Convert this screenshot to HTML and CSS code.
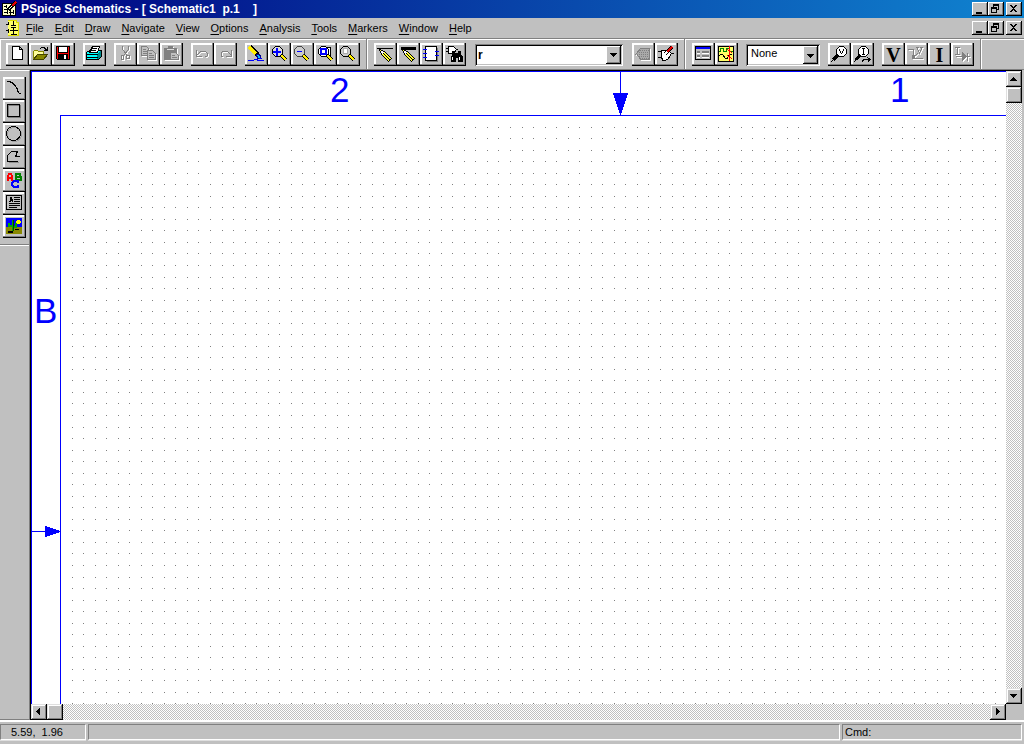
FILE: index.html
```html
<!DOCTYPE html>
<html lang="en">
<head>
<meta charset="utf-8">
<title>PSpice Schematics</title>
<link rel="stylesheet" href="styles.css">
</head>
<body>
<div class="app">
  <header class="titlebar">
    <svg class="app-icon" width="16" height="16" viewBox="0 0 16 16"><path fill="#ffc" stroke="#000" d="M.5 2.500h13v12H.5z"/><path fill="none" stroke="#000" d="M2 5.500h3M2 8.500h4M2 11.500h3M4.500 4v3M5.500 8v5M8.500 9v5M11.500 9v4M7 11.500h4"/><path stroke="#000" stroke-width="3" d="M6 9l8-8"/><path stroke="#e00000" stroke-width="2" d="M10 5l4-4"/><path stroke="#fff" d="M6.500 8.500l3-3"/></svg>
    <h1 class="title">PSpice Schematics - [ Schematic1&nbsp; p.1&nbsp;&nbsp;&nbsp; ]</h1>
    <div class="winbtns">
      <button class="wbtn" aria-label="Minimize"><svg width="16" height="14"><path d="M4 10h6v2H4z"/></svg></button>
      <button class="wbtn" aria-label="Restore"><svg width="16" height="14"><path fill="none" stroke="#000" d="M5.500 5V2.500h5v5H9M5 3.500h6M3.500 6.500h5v4h-5zM3 5.500h6"/></svg></button>
      <button class="wbtn close" aria-label="Close"><svg width="16" height="14"><path d="M4 3h2v1h1v1h1V4h1V3h2v1h-1v1H9v1H8v1h1v1h1v1h1v1H9V9H8V8H7v1H6v1H4V9h1V8h1V7h1V6H6V5H5V4H4z"/></svg></button>
    </div>
  </header>

  <nav class="menubar">
    <svg class="doc-icon" width="13" height="16" viewBox="0 0 13 16"><path fill="#ff6" d="M2 0h9v2h2v13H2z"/><path fill="none" stroke="#dd0" d="M2 .5h8.500v2h2v12.500H2"/><path fill="none" stroke="#000" d="M0 4.500h3M0 10.500h3M7.500 1v4M5 5.500h5M5 7.500h5M7.500 8v6M4 10.500h8M2.500 2v3M2.500 9v4M5 14.500h6"/></svg>
    <button class="menu"><u>F</u>ile</button>
    <button class="menu"><u>E</u>dit</button>
    <button class="menu"><u>D</u>raw</button>
    <button class="menu"><u>N</u>avigate</button>
    <button class="menu"><u>V</u>iew</button>
    <button class="menu"><u>O</u>ptions</button>
    <button class="menu"><u>A</u>nalysis</button>
    <button class="menu"><u>T</u>ools</button>
    <button class="menu"><u>M</u>arkers</button>
    <button class="menu"><u>W</u>indow</button>
    <button class="menu"><u>H</u>elp</button>
    <div class="winbtns">
      <button class="wbtn" aria-label="Minimize document"><svg width="16" height="14"><path d="M4 10h6v2H4z"/></svg></button>
      <button class="wbtn" aria-label="Restore document"><svg width="16" height="14"><path fill="none" stroke="#000" d="M5.500 5V2.500h5v5H9M5 3.500h6M3.500 6.500h5v4h-5zM3 5.500h6"/></svg></button>
      <button class="wbtn close" aria-label="Close document"><svg width="16" height="14"><path d="M4 3h2v1h1v1h1V4h1V3h2v1h-1v1H9v1H8v1h1v1h1v1h1v1H9V9H8V8H7v1H6v1H4V9h1V8h1V7h1V6H6V5H5V4H4z"/></svg></button>
    </div>
  </nav>

  <div class="toolbar">
    <div class="band">
      <div class="group">
        <button class="tool" aria-label="New"><svg viewBox="0 0 23 23"><path fill="#fff" stroke="#000" d="M6.500 3.500h7l3 3v10h-10zM13.500 3.500v3h3"/></svg></button>
        <button class="tool" aria-label="Open"><svg viewBox="0 0 23 23"><path fill="#ff9" stroke="#880" d="M4.500 16.500v-8l1-1h3l1 1h5v3"/><path fill="#880" stroke="#440" d="M4.500 16.500l4-5h10l-4 5z"/><path fill="none" stroke="#000" d="M11 5.500l2-1h2l3 3M18.500 4v3.500H15"/></svg></button>
        <button class="tool" aria-label="Save"><svg viewBox="0 0 23 23"><path fill="red" stroke="#000" d="M4.500 3.500h13v13h-12l-1-1z"/><path d="M6 3h10v7H6zM6 11h10v6H6z"/><path fill="#fff" d="M7 4h8v5H7zM12 12h2v4h-2z"/></svg></button>
      </div>
      <div class="group">
        <button class="tool" aria-label="Print"><svg viewBox="0 0 23 23"><path fill="#0ff" stroke="#000" d="M3.500 9.500l3-2h12v6l-3 3h-12z"/><path fill="#088" d="M14 11l4-3v6l-3 2h-1z"/><path fill="#fff" stroke="#000" d="M6.500 9.500l3-6h7l-2 6z"/><path stroke="#000" d="M9 5.500h5M8 7.500h5M4 11.500h11M4 14.500h11"/></svg></button>
      </div>
      <div class="group">
        <button class="tool" disabled aria-label="Cut"><svg viewBox="0 0 23 23"><path fill="none" stroke="#808080" d="M8.500 3v3l2 3 3 4M14.500 3v3l-2 3-3 4M7.500 12.500h2v4h-2zM12.500 12.500h3v3h-3z"/></svg></button>
        <button class="tool" disabled aria-label="Copy"><svg viewBox="0 0 23 23"><path fill="#c0c0c0" stroke="#808080" d="M4.500 3.500h5l2 2v7h-7zM6 6.500h3M6 8.500h4M6 10.500h4"/><path fill="#c0c0c0" stroke="#808080" d="M10.500 7.500h5l3 3v6h-8zM12 10.500h3M12 12.500h5M12 14.500h5"/></svg></button>
        <button class="tool" disabled aria-label="Paste"><svg viewBox="0 0 23 23"><path fill="#808080" d="M4 5h4V3h5v2h4v12H4z"/><path stroke="#ddd" d="M7 6.500h7"/><path fill="#c0c0c0" stroke="#808080" d="M10.500 9.500h5l3 3v4h-8zM12 12.500h3M12 14.500h5"/></svg></button>
      </div>
      <div class="group">
        <button class="tool" disabled aria-label="Undo"><svg viewBox="0 0 23 23"><path fill="none" stroke="#808080" d="M5.500 7v6H11M6 12l4-4h4l2 2v3l-2 1"/></svg></button>
        <button class="tool" disabled aria-label="Redo"><svg viewBox="0 0 23 23"><path fill="none" stroke="#808080" d="M17.500 7v6H12M17 12l-4-4H9l-2 2v3l2 1"/></svg></button>
      </div>
      <div class="group">
        <button class="tool" aria-label="Redraw"><svg viewBox="0 0 23 23"><path stroke="#000" stroke-width="5" d="M5 4l8 8"/><path stroke="#fe0" stroke-width="4" d="M4 4l7 7"/><path fill="#0bf" stroke="#008" d="M11.500 11.500h3l1 2v2h-3z"/><path stroke="#00f" d="M3 17.500h6M12 17.500h7M9 16.500h4M14 15.500h3"/></svg></button>
        <button class="tool" aria-label="Zoom in"><svg viewBox="0 0 23 23"><path stroke="#000" stroke-width="4" d="M13 12l5 5"/><path stroke="#fe0" stroke-width="2" d="M13 12l5 5"/><path fill="#ddd" stroke="#000" d="M7.500 3.500h4l3 3v4l-3 3h-4l-3-3v-4z"/><path fill="#00f" d="M8 5h2v3h3v2h-3v3H8v-3H5V8h3z"/></svg></button>
        <button class="tool" aria-label="Zoom out"><svg viewBox="0 0 23 23"><path stroke="#000" stroke-width="4" d="M12 12l5 5"/><path stroke="#fe0" stroke-width="2" d="M12 12l5 5"/><path fill="#ccc" stroke="#444" d="M6.500 3.500h4l3 3v4l-3 3h-4l-3-3v-4z"/><path stroke="#00f" d="M6 8.500h5"/></svg></button>
        <button class="tool" aria-label="Zoom area"><svg viewBox="0 0 23 23"><path fill="#fff" stroke="#000" d="M8.500 4.500h8v9h-8z"/><path stroke="#000" stroke-width="4" d="M13 12l5 5"/><path stroke="#fe0" stroke-width="2" d="M13 12l5 5"/><path fill="#fff" stroke="#000" d="M7.500 3.500h4l3 3v4l-3 3h-4l-3-3v-4z"/><path fill="#fff" stroke="#00f" stroke-width="2" d="M7 6h5v5H7z"/></svg></button>
        <button class="tool" aria-label="Zoom to fit"><svg viewBox="0 0 23 23"><path stroke="#000" stroke-width="4" d="M12 12l5 5"/><path stroke="#fe0" stroke-width="2" d="M12 12l5 5"/><path fill="#ccc" stroke="#000" d="M6.500 3.500h4l3 3v4l-3 3h-4l-3-3v-4z"/><path fill="#fff" stroke="#aaa" d="M6.500 5.500h4v5h-4z"/></svg></button>
      </div>
    </div>
    <div class="band">
      <div class="group">
        <button class="tool" aria-label="Draw wire"><svg viewBox="0 0 23 23"><path stroke="#000" d="M3 5.500h16"/><path fill="#ff3" stroke="#000" d="M5.500 6.500l5 2 7 7-3 3-7-7z"/><path fill="#fff" d="M7 8l3 1-2 2z"/><path stroke="#000" d="M9 10l7 7"/></svg></button>
        <button class="tool" aria-label="Draw bus"><svg viewBox="0 0 23 23"><path d="M4 4h15v3H4z"/><path fill="#ff3" stroke="#000" d="M5.500 6.500l5 2 7 7-3 3-7-7z"/><path fill="#fff" d="M7 8l3 1-2 2z"/><path stroke="#000" d="M9 10l7 7"/></svg></button>
        <button class="tool" aria-label="Draw block"><svg viewBox="0 0 23 23"><path fill="#808080" d="M7 5h11v14H7z"/><path fill="#fff" stroke="#000" d="M5.500 3.500h11v14h-11z"/><path stroke="#00f" d="M3 6.500h4M3 10.500h4M3 14.500h4M15 8.500h4M15 12.500h4"/></svg></button>
        <button class="tool" aria-label="Get new part"><svg viewBox="0 0 23 23"><path fill="#fff" stroke="#000" d="M5.500 3.500h5l3 3-3 4h-5zM3 5.500h3M3 8.500h3M13 6.500h2"/><path d="M9 8h3v2h3V8h3v3l2 3v5h-5v-4h-2v4H8v-5l1-2z"/><path stroke="#fff" d="M9.500 14v3M16.500 14v3"/></svg></button>
      </div>
      <div class="combo part">
        <input type="text" value="r" aria-label="Part name">
        <button class="arrow" aria-label="Recent parts"><svg width="15" height="17"><path d="M4 7h7v1h-1v1H9v1H8v1H7v-1H6V9H5V8H4z"/></svg></button>
      </div>
      <div class="group">
        <button class="tool" disabled aria-label="Edit attributes"><svg viewBox="0 0 23 23"><path fill="#aaa" stroke="#808080" d="M4.500 10.500l4-5h9v11h-9z"/><path stroke="#808080" stroke-dasharray="1 1" d="M8 7.500h10M7 9.500h11M3 11.500h15M7 13.500h11M8 15.500h10"/></svg></button>
        <button class="tool" aria-label="Edit symbol"><svg viewBox="0 0 23 23"><path fill="#fff" stroke="#000" d="M6.500 7.500h7l3 3-3 5-3 2h-3l-1-4zM3 8.500h4M3 14.500h4M16 10.500h3"/><path stroke="#000" stroke-width="4" d="M10 11l7-7"/><path stroke="#e00000" stroke-width="2" d="M12 9l5-5"/><path stroke="#fff" stroke-width="2" d="M9 12l3-3"/></svg></button>
      </div>
    </div>
    <div class="band">
      <div class="group">
        <button class="tool" aria-label="Analysis setup"><svg viewBox="0 0 23 23"><path fill="#c0c0c0" stroke="#000" d="M3.500 3.500h15v13h-15z"/><path fill="#00f" d="M4 4h14v2H4z"/><path stroke="#808080" stroke-width="2" d="M5 9h3M5 13h3M10 9h7M10 13h7"/><path stroke="#fff" d="M5 10.500h3M5 14.500h3M10 10.500h7M10 14.500h7"/></svg></button>
        <button class="tool" aria-label="Simulate"><svg viewBox="0 0 23 23"><path fill="#ff6" stroke="#000" d="M3.500 3.500h15v15h-15z"/><path fill="none" stroke="#080" d="M4 8.500h1.500v-3h3v3h3v-3h3v3h3"/><path fill="none" stroke="#000" d="M4 13l2-2 2 1 2 3 2 1 2-4 3-1"/><path stroke="red" d="M14.500 3v15M12 6l5 4M12 12l5 4"/></svg></button>
      </div>
      <div class="combo marker"><select aria-label="Marker colour"><option>None</option></select></div>
      <div class="group">
        <button class="tool" aria-label="Voltage marker"><svg viewBox="0 0 23 23"><path stroke="#000" stroke-width="3" d="M5 17l5-5"/><path stroke="#000" d="M3 19l9-9"/><path fill="#fff" stroke="#000" d="M11.500 3.500h4l3 3v4l-3 3h-4l-3-3v-4z"/><path fill="none" stroke="#000" d="M11.500 5.500v2l2 3 2-3v-2"/></svg></button>
        <button class="tool" aria-label="Current marker"><svg viewBox="0 0 23 23"><path stroke="#000" stroke-width="3" d="M5 17l4-5"/><path stroke="#000" d="M3 19l8-9"/><path fill="#fff" stroke="#000" d="M10.500 3.500h4l3 3v4l-3 3h-4l-3-3v-4z"/><path fill="none" stroke="#000" d="M11 5.500h3M12.500 6v5M11 11.500h3M11 18.500l2-2h5M16 14l3 2.500-2 2"/></svg></button>
      </div>
      <div class="group">
        <button class="tool letter" aria-label="Show voltages">V</button>
        <button class="tool" disabled aria-label="Voltage label"><svg viewBox="0 0 23 23"><path fill="none" stroke="#808080" d="M3 6.500h5v9M8 15.500h10M9 14l4-4M12.500 4v2l2 4 2-4V4M11 4.500h3M15 4.500h3"/><path fill="#808080" d="M7 12h3v4H7z"/></svg></button>
        <button class="tool letter" aria-label="Show currents">I</button>
        <button class="tool" disabled aria-label="Current label"><svg viewBox="0 0 23 23"><path fill="none" stroke="#808080" d="M4 4.500h5M6.500 5v6M4 11.500h5M5 13.500h14M16.500 10v8"/><path fill="#808080" d="M11 9l5 4.500-5 4.500z"/></svg></button>
      </div>
    </div>
    <div class="band rest"></div>
  </div>

  <main class="workspace">
    <aside class="sidebar">
      <div class="palette">
        <button class="tool" aria-label="Arc"><svg viewBox="0 0 23 23"><path fill="none" stroke="#000" d="M4 4.500h2l3 1 3 3 2 3 1 3 1 1.500h2"/></svg></button>
        <button class="tool" aria-label="Box"><svg viewBox="0 0 23 23"><path fill="none" stroke="#808080" d="M5.500 5.500h12v12h-12z"/><path fill="none" stroke="#000" d="M4.500 4.500h12v12h-12z"/></svg></button>
        <button class="tool" aria-label="Circle"><svg viewBox="0 0 23 23"><circle cx="11.500" cy="11.500" r="7" fill="none" stroke="#a0a0a0"/><circle cx="10.500" cy="10.500" r="7" fill="none" stroke="#000"/></svg></button>
        <button class="tool" aria-label="Polyline"><svg viewBox="0 0 23 23"><path fill="none" stroke="#909090" d="M16 16.500H5.500"/><path fill="none" stroke="#000" d="M15 15.500H4.500V9.500l4-4h6l-2 5H17M13.500 6v4"/></svg></button>
        <button class="tool" aria-label="Text"><svg viewBox="0 0 23 23"><g fill="none" stroke-width="2"><path stroke="red" d="M5 12V7l1-2h2l1 2v5M5 9h4M4 11h2M8 11h2"/><path stroke="#008000" d="M13 4v8M12 5h5v3h-4M13 8h5v3h-6"/><path stroke="#00f" d="M15 12h-4l-2 2v2l2 2h4v-2M15 11v3"/></g></svg></button>
        <button class="tool" aria-label="Text box"><svg viewBox="0 0 23 23"><path fill="none" stroke="#000" d="M3.500 3.500h15v14h-15zM11 5.500h6M11 7.500h6M11 9.500h6M6 11.500h11M6 13.500h11M6 15.500h8M6 9.500h1v-2l1-2 1 2v2h1M7 8.500h3"/></svg></button>
        <button class="tool" aria-label="Insert picture"><svg viewBox="0 0 23 23"><path fill="#00f" d="M3 3h16v16H3z"/><path fill="#880" d="M3 12h16v7H3z"/><path fill="#ff0" d="M14 5h3v1h1v2h-1v1h-3V8h-1V6h1z"/><path stroke="#0a0" fill="none" stroke-width="2" d="M10 5v11M6 8v3h4M10 12h3V8"/><path stroke="#040" d="M10.500 5v11"/><path d="M5 16h5v2H5zM12 14h4v1h-4z"/></svg></button>
      </div>
    </aside>
    <section class="view">
      <svg class="sheet" role="img" aria-label="Schematic page">
        <defs>
          <pattern id="row" width="150" height="1" patternUnits="userSpaceOnUse"><path fill="#808080" d="M0 0h1v1H0zM11 0h1v1h-1zM23 0h1v1h-1zM34 0h1v1h-1zM46 0h1v1h-1zM57 0h1v1h-1zM69 0h1v1h-1zM80 0h1v1h-1zM92 0h1v1h-1zM103 0h1v1h-1zM115 0h1v1h-1zM126 0h1v1h-1zM138 0h1v1h-1z"/></pattern>
          <pattern id="grid" width="150" height="150" patternUnits="userSpaceOnUse"><path fill="url(#row)" d="M0 0h150v1H0zM0 11h150v1H0zM0 23h150v1H0zM0 34h150v1H0zM0 46h150v1H0zM0 57h150v1H0zM0 69h150v1H0zM0 80h150v1H0zM0 92h150v1H0zM0 103h150v1H0zM0 115h150v1H0zM0 126h150v1H0zM0 138h150v1H0z"/></pattern>
        </defs>
        <svg x="41" y="56" width="100%" height="100%"><rect width="100%" height="100%" fill="url(#grid)"/></svg>
        <g fill="#00f">
          <rect width="100%" height="1"/>
          <rect width="1" height="100%"/>
          <rect x="29" y="44" width="100%" height="1"/>
          <rect x="29" y="44" width="1" height="100%"/>
          <rect x="589" width="1" height="44"/>
          <path d="M582 22h15l-7 22h-1z"/>
          <path d="M1 460h13v-5l15 5v1l-15 5v-5H1z"/>
          <text x="299" y="31">2</text>
          <text x="859" y="31">1</text>
          <text x="3" y="252">B</text>
        </g>
      </svg>
      <div class="scroll vertical">
        <button class="sbtn" aria-label="Scroll up"><svg width="16" height="16"><path d="M7 6h1v1h1v1h1v1h1v1H4V9h1V8h1V7h1z"/></svg></button>
        <button class="sbtn" aria-label="Vertical position"></button>
        <span class="track"></span>
        <button class="sbtn" aria-label="Scroll down"><svg width="16" height="16"><path d="M4 6h7v1h-1v1H9v1H8v1H7V9H6V8H5V7H4z"/></svg></button>
      </div>
      <div class="scroll horizontal">
        <button class="sbtn" aria-label="Scroll left"><svg width="16" height="16"><path d="M9 4v7H8v-1H7V9H6V8H5V7h1V6h1V5h1V4z"/></svg></button>
        <button class="sbtn" aria-label="Horizontal position"></button>
        <span class="track"></span>
        <button class="sbtn" aria-label="Scroll right"><svg width="16" height="16"><path d="M6 4v7h1v-1h1V9h1V8h1V7H9V6H8V5H7V4z"/></svg></button>
      </div>
    </section>
  </main>

  <footer class="status">
    <div class="panel coords">5.59,&nbsp; 1.96</div>
    <div class="panel message"></div>
    <div class="panel cmd">Cmd:</div>
  </footer>
</div>
</body>
</html>
```

FILE: styles.css
```css
* { box-sizing: border-box; }

body {
  margin: 0;
  font: 11px/14px "Liberation Sans", Arial, sans-serif;
  color: #000;
  background: #c0c0c0;
}

button, input, select {
  margin: 0;
  padding: 0;
  border: 0;
  border-radius: 0;
  font: inherit;
  color: inherit;
  background: #c0c0c0;
}

svg { display: block; shape-rendering: crispEdges; }

.app { display: flex; flex-direction: column; height: 100vh; overflow: hidden; }

/* Title and menu bars */
.titlebar {
  display: flex;
  align-items: center;
  flex: none;
  height: 18px;
  padding: 0 2px;
  gap: 3px;
  background: linear-gradient(to right, #000080, #1084d0);
}
.title { margin: 0; font-size: 12px; line-height: 18px; font-weight: bold; color: #fff; }
.winbtns { display: flex; margin-left: auto; }
.wbtn {
  width: 16px;
  height: 14px;
  box-shadow: inset -1px -1px #000, inset 1px 1px #fff, inset -2px -2px #808080;
}
.close { margin-left: 2px; }

.menubar {
  display: flex;
  align-items: center;
  flex: none;
  height: 20px;
  padding: 0 2px 0 6px;
  gap: 11px;
}
.doc-icon { margin-right: -4px; }
.menu { line-height: 20px; white-space: nowrap; }
.menu u { text-underline-offset: 2px; }

/* Toolbar */
.toolbar {
  display: flex;
  flex: none;
  height: 32px;
  border-top: 1px solid #808080;
  border-bottom: 1px solid #808080;
  box-shadow: inset 0 1px #fff;
}
.band {
  display: flex;
  align-items: center;
  gap: 8px;
  padding: 1px 6px 0;
  border-right: 1px solid #808080;
  box-shadow: inset 1px 1px #fff;
}
.band + .band { padding-left: 7px; }
.band.rest { flex: 1; border-right: 0; }
.group { display: flex; }
.tool {
  display: block;
  width: 23px;
  height: 23px;
  box-shadow: inset -1px -1px #000, inset -2px -2px #808080, inset 2px 2px #fff;
}
.tool:disabled svg { filter: drop-shadow(1px 1px 0 #fff); }
.letter { font: bold 20px/22px "Liberation Serif", "Times New Roman", serif; }

.combo {
  display: flex;
  height: 22px;
  padding: 2px;
  background: #fff;
  box-shadow: inset 1px 1px #808080, inset -1px -1px #fff, inset 2px 2px #000, inset -2px -2px #c0c0c0;
}
.part { width: 148px; margin: 0 1px; }
.part input { flex: 1; min-width: 0; padding-left: 1px; font-weight: bold; font-size: 12px; background: #fff; outline: 0; }
.arrow { width: 15px; box-shadow: inset -1px -1px #000, inset 1px 1px #fff, inset -2px -2px #808080; }
.marker { width: 74px; position: relative; }
.marker select { flex: 1; padding: 0 0 3px 3px; appearance: none; background: #fff; outline: 0; }
.marker::after {
  content: "";
  position: absolute;
  right: 2px;
  top: 2px;
  width: 15px;
  height: 18px;
  background: linear-gradient(#000, #000) 4px 8px / 7px 1px no-repeat,
    linear-gradient(#000, #000) 5px 9px / 5px 1px no-repeat,
    linear-gradient(#000, #000) 6px 10px / 3px 1px no-repeat,
    linear-gradient(#000, #000) 7px 11px / 1px 1px no-repeat, #c0c0c0;
  box-shadow: inset -1px -1px #000, inset 1px 1px #fff, inset -2px -2px #808080;
  pointer-events: none;
}

/* Drawing area */
.workspace { display: flex; flex: 1; min-height: 0; padding-right: 2px; }
.sidebar {
  width: 30px;
  border-top: 1px solid #fff;
  border-right: 1px solid #808080;
  border-bottom: 1px solid #808080;
}
.palette { padding: 6px 3px; border-bottom: 1px solid #808080; box-shadow: 0 1px #fff; }

.view {
  display: grid;
  grid-template: minmax(0, 1fr) 16px / minmax(0, 1fr) 16px;
  flex: 1;
  min-width: 0;
  border-top: 1px solid #000;
  border-left: 1px solid #000;
}
.sheet { width: 100%; height: 100%; background: #fff; font: 35px "Liberation Sans", Arial, sans-serif; }
.scroll { display: flex; }
.vertical { flex-direction: column; }
.sbtn {
  flex: none;
  width: 16px;
  height: 16px;
  box-shadow: inset -1px -1px #000, inset 1px 1px #dfdfdf, inset -2px -2px #808080, inset 2px 2px #fff;
}
.track { flex: 1; background: repeating-conic-gradient(#c0c0c0 0 25%, #fff 0 50%) 0 0 / 2px 2px; }

/* Status bar */
.status {
  display: flex;
  flex: none;
  gap: 2px;
  height: 24px;
  padding: 2px 2px 4px 0;
  border-top: 2px solid #fff;
}
.panel {
  padding: 0 2px;
  line-height: 15px;
  border: 1px solid;
  border-color: #808080 #fff #fff #808080;
  box-shadow: 0 1px #dfdfdf;
}
.coords { width: 86px; padding-left: 10px; }
.message { flex: 1; }
.cmd { width: 180px; }
```
